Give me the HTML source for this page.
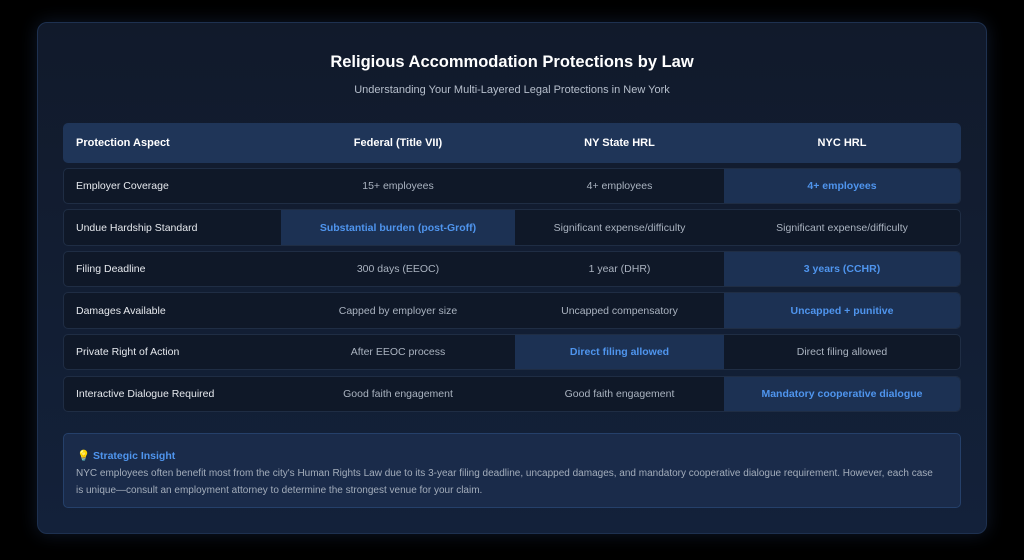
<!DOCTYPE html>
<html><head><style>
body{margin:0;width:1024px;height:560px;background:#000;font-family:"Liberation Sans",sans-serif;position:relative;overflow:hidden}
.card{position:absolute;left:37px;top:22px;width:948px;height:510px;border:1px solid #1e3150;border-radius:10px;background:linear-gradient(180deg,#111a2b,#13213a);box-shadow:0 0 18px rgba(40,70,120,.35)}
h1{position:absolute;top:53px;left:0;width:1024px;text-align:center;margin:0;font-size:16.5px;color:#fff;font-weight:bold}
.sub{position:absolute;top:84px;left:0;width:1024px;text-align:center;font-size:11px;color:#b6bfcc}
.row{position:absolute;left:63px;width:896px;border:1px solid #1f2d44;border-radius:5px;background:#0f1828;display:flex;font-size:10.5px;color:#aab3c0;overflow:hidden}
.row div{display:flex;align-items:center;justify-content:center}
.row div:first-child{justify-content:flex-start;padding-left:12px;width:205px;color:#e6e9ee}
.c2{width:234px}.c3{width:209px}.c4{flex:1}
.hl{background:#1c3153;color:#4f95ee!important;font-weight:bold}
.hdr{background:#1f3558;border-color:#1f3558;font-weight:bold;font-size:11px}
.hdr div{color:#fff!important}
.ins{position:absolute;left:63px;top:433px;width:896px;height:73px;border:1px solid #25406a;border-radius:5px;background:#1a2b4a}
.ins b{position:absolute;left:13px;top:15px;color:#4f95ee;font-size:10.5px}
.ins p{position:absolute;left:12px;top:31px;margin:0;font-size:10px;line-height:17px;color:#a3adbb;white-space:nowrap}
</style></head><body>
<div class="card"></div>
<h1>Religious Accommodation Protections by Law</h1>
<div class="sub">Understanding Your Multi-Layered Legal Protections in New York</div>
<div class="row hdr" style="top:123px;height:38px"><div>Protection Aspect</div><div class="c2">Federal (Title VII)</div><div class="c3">NY State HRL</div><div class="c4">NYC HRL</div></div>
<div class="row" style="top:168px;height:34px"><div>Employer Coverage</div><div class="c2">15+ employees</div><div class="c3">4+ employees</div><div class="c4 hl">4+ employees</div></div>
<div class="row" style="top:209px;height:35px"><div>Undue Hardship Standard</div><div class="c2 hl">Substantial burden (post-Groff)</div><div class="c3">Significant expense/difficulty</div><div class="c4">Significant expense/difficulty</div></div>
<div class="row" style="top:251px;height:34px"><div>Filing Deadline</div><div class="c2">300 days (EEOC)</div><div class="c3">1 year (DHR)</div><div class="c4 hl">3 years (CCHR)</div></div>
<div class="row" style="top:292px;height:35px"><div>Damages Available</div><div class="c2">Capped by employer size</div><div class="c3">Uncapped compensatory</div><div class="c4 hl">Uncapped + punitive</div></div>
<div class="row" style="top:334px;height:34px"><div>Private Right of Action</div><div class="c2">After EEOC process</div><div class="c3 hl">Direct filing allowed</div><div class="c4">Direct filing allowed</div></div>
<div class="row" style="top:376px;height:34px"><div>Interactive Dialogue Required</div><div class="c2">Good faith engagement</div><div class="c3">Good faith engagement</div><div class="c4 hl">Mandatory cooperative dialogue</div></div>
<div class="ins"><b>💡 Strategic Insight</b><p>NYC employees often benefit most from the city's Human Rights Law due to its 3-year filing deadline, uncapped damages, and mandatory cooperative dialogue requirement. However, each case<br>is unique—consult an employment attorney to determine the strongest venue for your claim.</p></div>
</body></html>
